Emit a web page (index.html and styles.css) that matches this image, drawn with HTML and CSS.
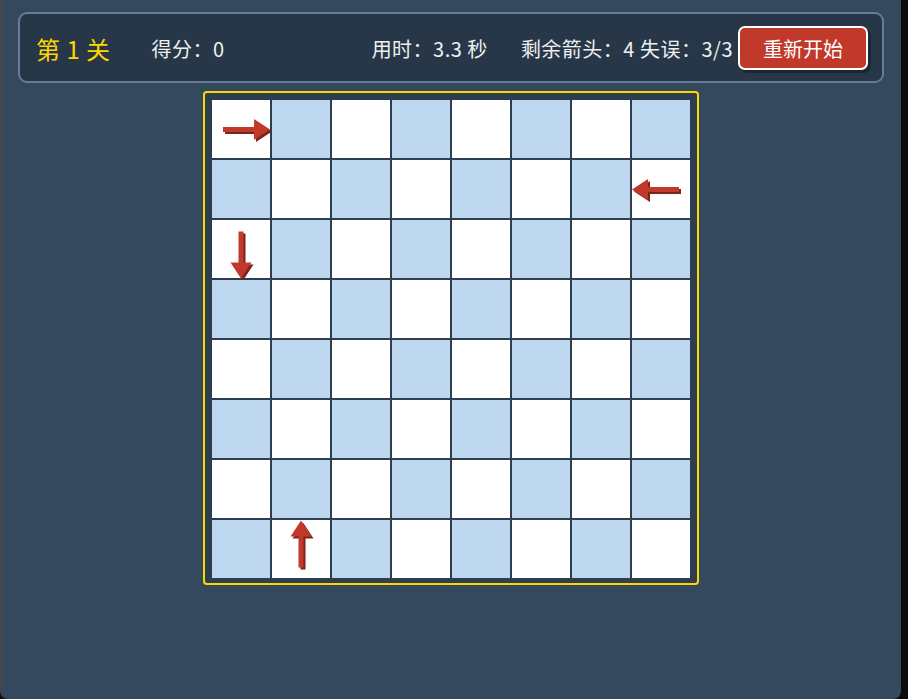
FILE: index.html
```html
<!DOCTYPE html>
<html lang="zh-CN">
<head>
    <meta charset="UTF-8">
    <meta name="viewport" content="width=device-width, initial-scale=1.0">
    <title>箭头消除</title>
    <link rel="stylesheet" href="styles.css">
</head>
<body>
    <div class="app">
        <div class="header">
            <span class="level">第 1 关</span>
            <span class="score">得分：0</span>
            <span class="spacer"></span>
            <span class="time">用时：3.3 秒</span>
            <span class="info">剩余箭头：4 失误：3/3</span>
            <button class="restart">重新开始</button>
        </div>

        <div class="board-wrap">
            <div id="board" class="board"></div>
        </div>
    </div>

    <script>
        const SIZE = 8;
        const arrows = {
            '0,0': 0,    // right
            '1,7': 180,  // left
            '2,0': 90,   // down
            '7,1': 270   // up
        };
        const shape = 'M11 27H42V19L58 29.5L42 40V32H11Z';

        function arrowSvg(deg) {
            return `
                <svg class="arrow" viewBox="0 0 58 58" width="58" height="58">
                    <g transform="translate(2 2)">
                        <path d="${shape}" fill="#7b241c" transform="rotate(${deg} 29 29.5)"/>
                    </g>
                    <path d="${shape}" fill="#c0392b" transform="rotate(${deg} 29 29.5)"/>
                </svg>`;
        }

        function drawBoard() {
            let html = '';
            for (let r = 0; r < SIZE; r++) {
                for (let c = 0; c < SIZE; c++) {
                    const key = r + ',' + c;
                    const shade = (r + c) % 2 ? 'blue' : 'white';
                    const inner = key in arrows ? arrowSvg(arrows[key]) : '';
                    html += `<div class="cell ${shade}">${inner}</div>`;
                }
            }
            document.getElementById('board').innerHTML = html;
        }

        drawBoard();
    </script>
</body>
</html>
```

FILE: styles.css
```css
html {
    background: #0c0c0c;
}
body {
    margin: 0;
    height: 699px;
    width: 899px;
    background: #34495e;
    border-left: 2px solid #44474c;
    border-radius: 0 0 8px 8px;
    font-family: "Noto Sans CJK SC", "Liberation Sans", sans-serif;
    color: #ecf0f1;
    overflow: hidden;
}
.app {
    padding: 12px 17px 0 16px;
}
.header {
    display: flex;
    align-items: center;
    height: 44px;
    padding: 12px 14px 11px 16px;
    background: #273747;
    border: 2px solid #687d93;
    border-radius: 9px;
    font-size: 20px;
    letter-spacing: 0.5px;
}
.level {
    color: #ffd700;
    font-size: 24px;
    margin-right: 41px;
}
.spacer {
    flex: 1;
}
.time {
    margin-right: 33px;
}
.restart {
    margin-left: 5px;
    height: 44px;
    padding: 0 23px;
    background: #c0392b;
    color: #fff;
    border: 2px solid #fff;
    border-radius: 7px;
    box-shadow: 3px 3px 0 #1c2733;
    font-family: inherit;
    font-size: 20px;
    letter-spacing: 0;
    cursor: pointer;
}
.board-wrap {
    display: flex;
    justify-content: center;
    margin-top: 8px;
    padding-right: 1px;
}
.board {
    display: grid;
    grid-template-columns: repeat(8, 58px);
    grid-auto-rows: 58px;
    gap: 2px;
    padding: 7px 7px 5px;
    background: #2c3e50;
    border: 2px solid #ffd700;
    border-radius: 4px;
}
.cell.white { background: #fff; }
.cell.blue { background: #bdd7ee; }
.arrow {
    display: block;
    overflow: visible;
}
```
